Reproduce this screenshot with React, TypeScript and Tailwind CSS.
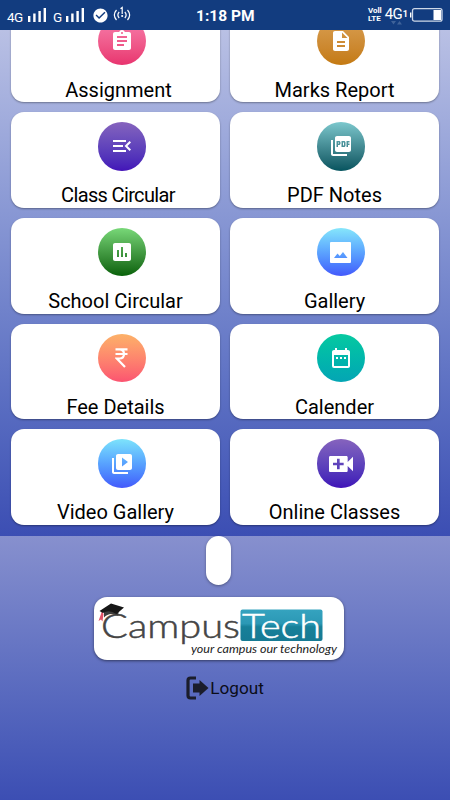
import type { ReactNode } from "react";
import {
  MdAssessment,
  MdAssignment,
  MdCheckCircle,
  MdDateRange,
  MdDescription,
  MdPictureAsPdf,
  MdVideoCall,
  MdVideoLibrary,
} from "react-icons/md";

type Tile = {
  label: string;
  icon: ReactNode;
  circle: string;
  text?: string;
};

const PhotoIcon = () => (
  <svg width="21" height="21" viewBox="0 0 21 21" fill="white">
    <path
      fillRule="evenodd"
      d="M1 0h19q1 0 1 1v19q0 1-1 1H1q-1 0-1-1V1q0-1 1-1ZM4 16h13.500l-4.500-6-3.200 4-2.300-2.600Z"
    />
  </svg>
);

const MenuIcon = () => (
  <svg width="18" height="12" viewBox="0 0 18 12" fill="none" stroke="white" strokeWidth="2">
    <path d="M0 1h13M0 6h10M0 11h13M17.300 1.800 13 6l4.300 4.200" />
  </svg>
);

const RupeeIcon = () => (
  <svg width="13" height="20" viewBox="0 0 13 20" fill="none" stroke="white" strokeWidth="2.200">
    <path d="M.5 1.300h12M.5 6h12M.5 1.300H4.500Q9 1.500 9 6 9 10.500 4.500 10.500H1.800L10 19" />
  </svg>
);

const tiles: Tile[] = [
  { label: "Assignment", icon: <MdAssignment size={24} />, circle: "from-[#f77fae] to-[#e8336f]", text: "ml-[6px]" },
  { label: "Marks Report", icon: <MdDescription size={24} />, circle: "from-[#d9a052] to-[#c47a10]" },
  {
    label: "Class Circular",
    icon: <MenuIcon />,
    circle: "from-[#8663bd] to-[#4312b8]",
    text: "ml-[5px] tracking-[-0.65px]",
  },
  { label: "PDF Notes", icon: <MdPictureAsPdf size={24} />, circle: "from-[#7cc8cd] to-[#04545f]" },
  { label: "School Circular", icon: <MdAssessment size={24} />, circle: "from-[#78d878] to-[#066208]" },
  { label: "Gallery", icon: <PhotoIcon />, circle: "from-[#86e6fb] to-[#4458fb]" },
  { label: "Fee Details", icon: <RupeeIcon />, circle: "from-[#fcb168] to-[#fb5370]" },
  { label: "Calender", icon: <MdDateRange size={24} />, circle: "from-[#07c9a0] to-[#04a5b4]" },
  { label: "Video Gallery", icon: <MdVideoLibrary size={24} />, circle: "from-[#7de3fb] to-[#4458fb]" },
  { label: "Online Classes", icon: <MdVideoCall size={32} />, circle: "from-[#8663bd] to-[#4010b8]" },
];

const Signal = () => (
  <svg width="19" height="15" viewBox="0 0 19 15" fill="white">
    <rect x="0" y="8" width="2.4" height="6" />
    <rect x="5.2" y="5.5" width="2.4" height="8.5" />
    <rect x="10.4" y="3" width="2.4" height="11" />
    <rect x="15.6" y="0" width="2.4" height="14" />
  </svg>
);

const StatusBar = () => (
  <header className="relative z-10 flex h-[30px] items-center bg-[#123c7f] px-[7px] text-white">
    <span className="mt-[4px] w-[21px] text-[13.5px] tracking-[-0.5px]">4G</span>
    <Signal />
    <span className="ml-[6px] mt-[4px] w-[13px] text-[13.5px]">G</span>
    <Signal />
    <MdCheckCircle size={17} className="ml-[7px]" />
    <svg className="ml-[4px]" width="19" height="18" viewBox="0 0 19 18" fill="none" stroke="white" strokeWidth="1.2">
      <path d="M3.5 4Q-.8 9 3.500 14M6.200 6Q3.500 9 6.200 12M14.500 4q4.300 5 0 10M11.800 6q2.700 3 0 6M7.500 2.700 9.200 1.500v6.500" />
      <path d="M8.300 10h1.800" strokeWidth="1.800" />
    </svg>
    <span className="ml-[64px] mt-[3px] text-[15.5px] font-bold leading-none whitespace-nowrap">1:18 PM</span>
    <div className="ml-auto mt-[-1px] flex flex-col text-[8px] font-bold leading-[8px]">
      <span>Voll</span>
      <span>LTE</span>
    </div>
    <span className="mb-[2px] ml-[3px] text-[15px] tracking-[-0.5px]">4G</span>
    <span className="ml-[0.5px] text-[9px] font-bold">1</span>
    <svg className="ml-[2px]" width="33" height="14" viewBox="0 0 33 14">
      <path d="M.7 4.500v5" stroke="white" strokeWidth="1.400" />
      <rect x="2.500" y=".7" width="29.500" height="12.500" rx="2" fill="none" stroke="#cdd8e8" strokeWidth="1.300" />
      <rect x="23.500" y="2" width="7.500" height="10" fill="white" />
    </svg>
    <svg className="absolute left-[391px] top-[20px]" width="12" height="5" viewBox="0 0 12 5" fill="#3f6299">
      <path d="M0 1h5L2.500 4.500ZM6 4.500h5L8.500 1Z" />
    </svg>
  </header>
);

const Logo = () => (
  <svg width="250" height="63" viewBox="0 0 250 63">
    <defs>
      <linearGradient id="teal" x1="0" y1="0" x2="0" y2="1">
        <stop offset="0" stopColor="#35a3bf" />
        <stop offset="0.450" stopColor="#2b98b5" />
        <stop offset="0.550" stopColor="#178099" />
        <stop offset="1" stopColor="#167a94" />
      </linearGradient>
    </defs>
    <rect x="146.500" y="12.500" width="82" height="31.500" rx="2" fill="url(#teal)" />
    <g fontSize="34" fontFamily="Lato, sans-serif" fontWeight="300" strokeWidth="0.500">
      <text x="7" y="40.500" fill="#454545" stroke="#454545" textLength="139" lengthAdjust="spacingAndGlyphs">
        Campus
      </text>
      <text x="148" y="40.500" fill="white" stroke="white" textLength="79" lengthAdjust="spacingAndGlyphs">
        Tech
      </text>
    </g>
    <text
      x="97"
      y="56"
      fontSize="11.500"
      fontStyle="italic"
      fontFamily="Lato, sans-serif"
      fill="#222"
      textLength="146"
      lengthAdjust="spacingAndGlyphs"
    >
      your campus our technology
    </text>
    <path d="M8 13.500 9.500 17 8.500 24.500 7 22.500 4.500 24 7 17Z" fill="#e35368" />
    <path d="M10 14v6.500q5-6 14-2l1-6Z" fill="#3c3c3c" />
    <path d="M5.500 14 17 6.500 30 10.500 22.500 17Q15 12 9 16Z" fill="#171717" />
  </svg>
);

const LogoutIcon = () => (
  <svg width="23" height="24" viewBox="0 0 23 24">
    <path d="M10 2H4.500Q2 2 2 4.500v15Q2 22 4.500 22H10" fill="none" stroke="#1b1d2b" strokeWidth="3.200" />
    <path d="M7 7.500h6.500V4L22.500 12l-9 8v-3.500H7Z" fill="#1b1d2b" />
  </svg>
);

export default function App() {
  return (
    <div className="flex h-[800px] w-[450px] flex-col overflow-hidden font-[Roboto,sans-serif]">
      <StatusBar />
      <main className="h-[506px] overflow-hidden bg-linear-to-b from-[#b9c0e4] to-[#3c4eb3] px-[11px]">
        <div className="-mt-[23.500px] grid grid-cols-2 gap-[10px]">
          {tiles.map((tile) => (
            <div
              key={tile.label}
              className="flex h-[95.700px] flex-col items-center rounded-[13px] bg-white pt-[10px] shadow-[0_1px_2px_rgba(0,0,0,0.35)]"
            >
              <div
                className={`ml-[12.500px] flex size-[48.500px] shrink-0 items-center justify-center rounded-full bg-linear-to-b text-white ${tile.circle}`}
              >
                {tile.icon}
              </div>
              <p className={`mt-[12.500px] text-[20px] leading-[24px] whitespace-nowrap text-black ${tile.text ?? ""}`}>
                {tile.label}
              </p>
            </div>
          ))}
        </div>
      </main>
      <footer className="flex flex-1 flex-col items-center bg-linear-to-b from-[#8790ce] to-[#3c4eb3]">
        <div className="ml-[-13px] h-[49px] w-[25px] rounded-full bg-white shadow-[0_1px_3px_rgba(0,0,0,0.350)]" />
        <div className="mt-[12px] ml-[-12px] h-[63px] w-[250px] overflow-hidden rounded-[13px] bg-white shadow-[0_1px_3px_rgba(0,0,0,0.500)]">
          <Logo />
        </div>
        <div className="mt-[16px] flex items-center text-[17.200px] leading-[24px] text-[#0b0d18]">
          <LogoutIcon />
          <span className="ml-px">Logout</span>
        </div>
      </footer>
    </div>
  );
}
